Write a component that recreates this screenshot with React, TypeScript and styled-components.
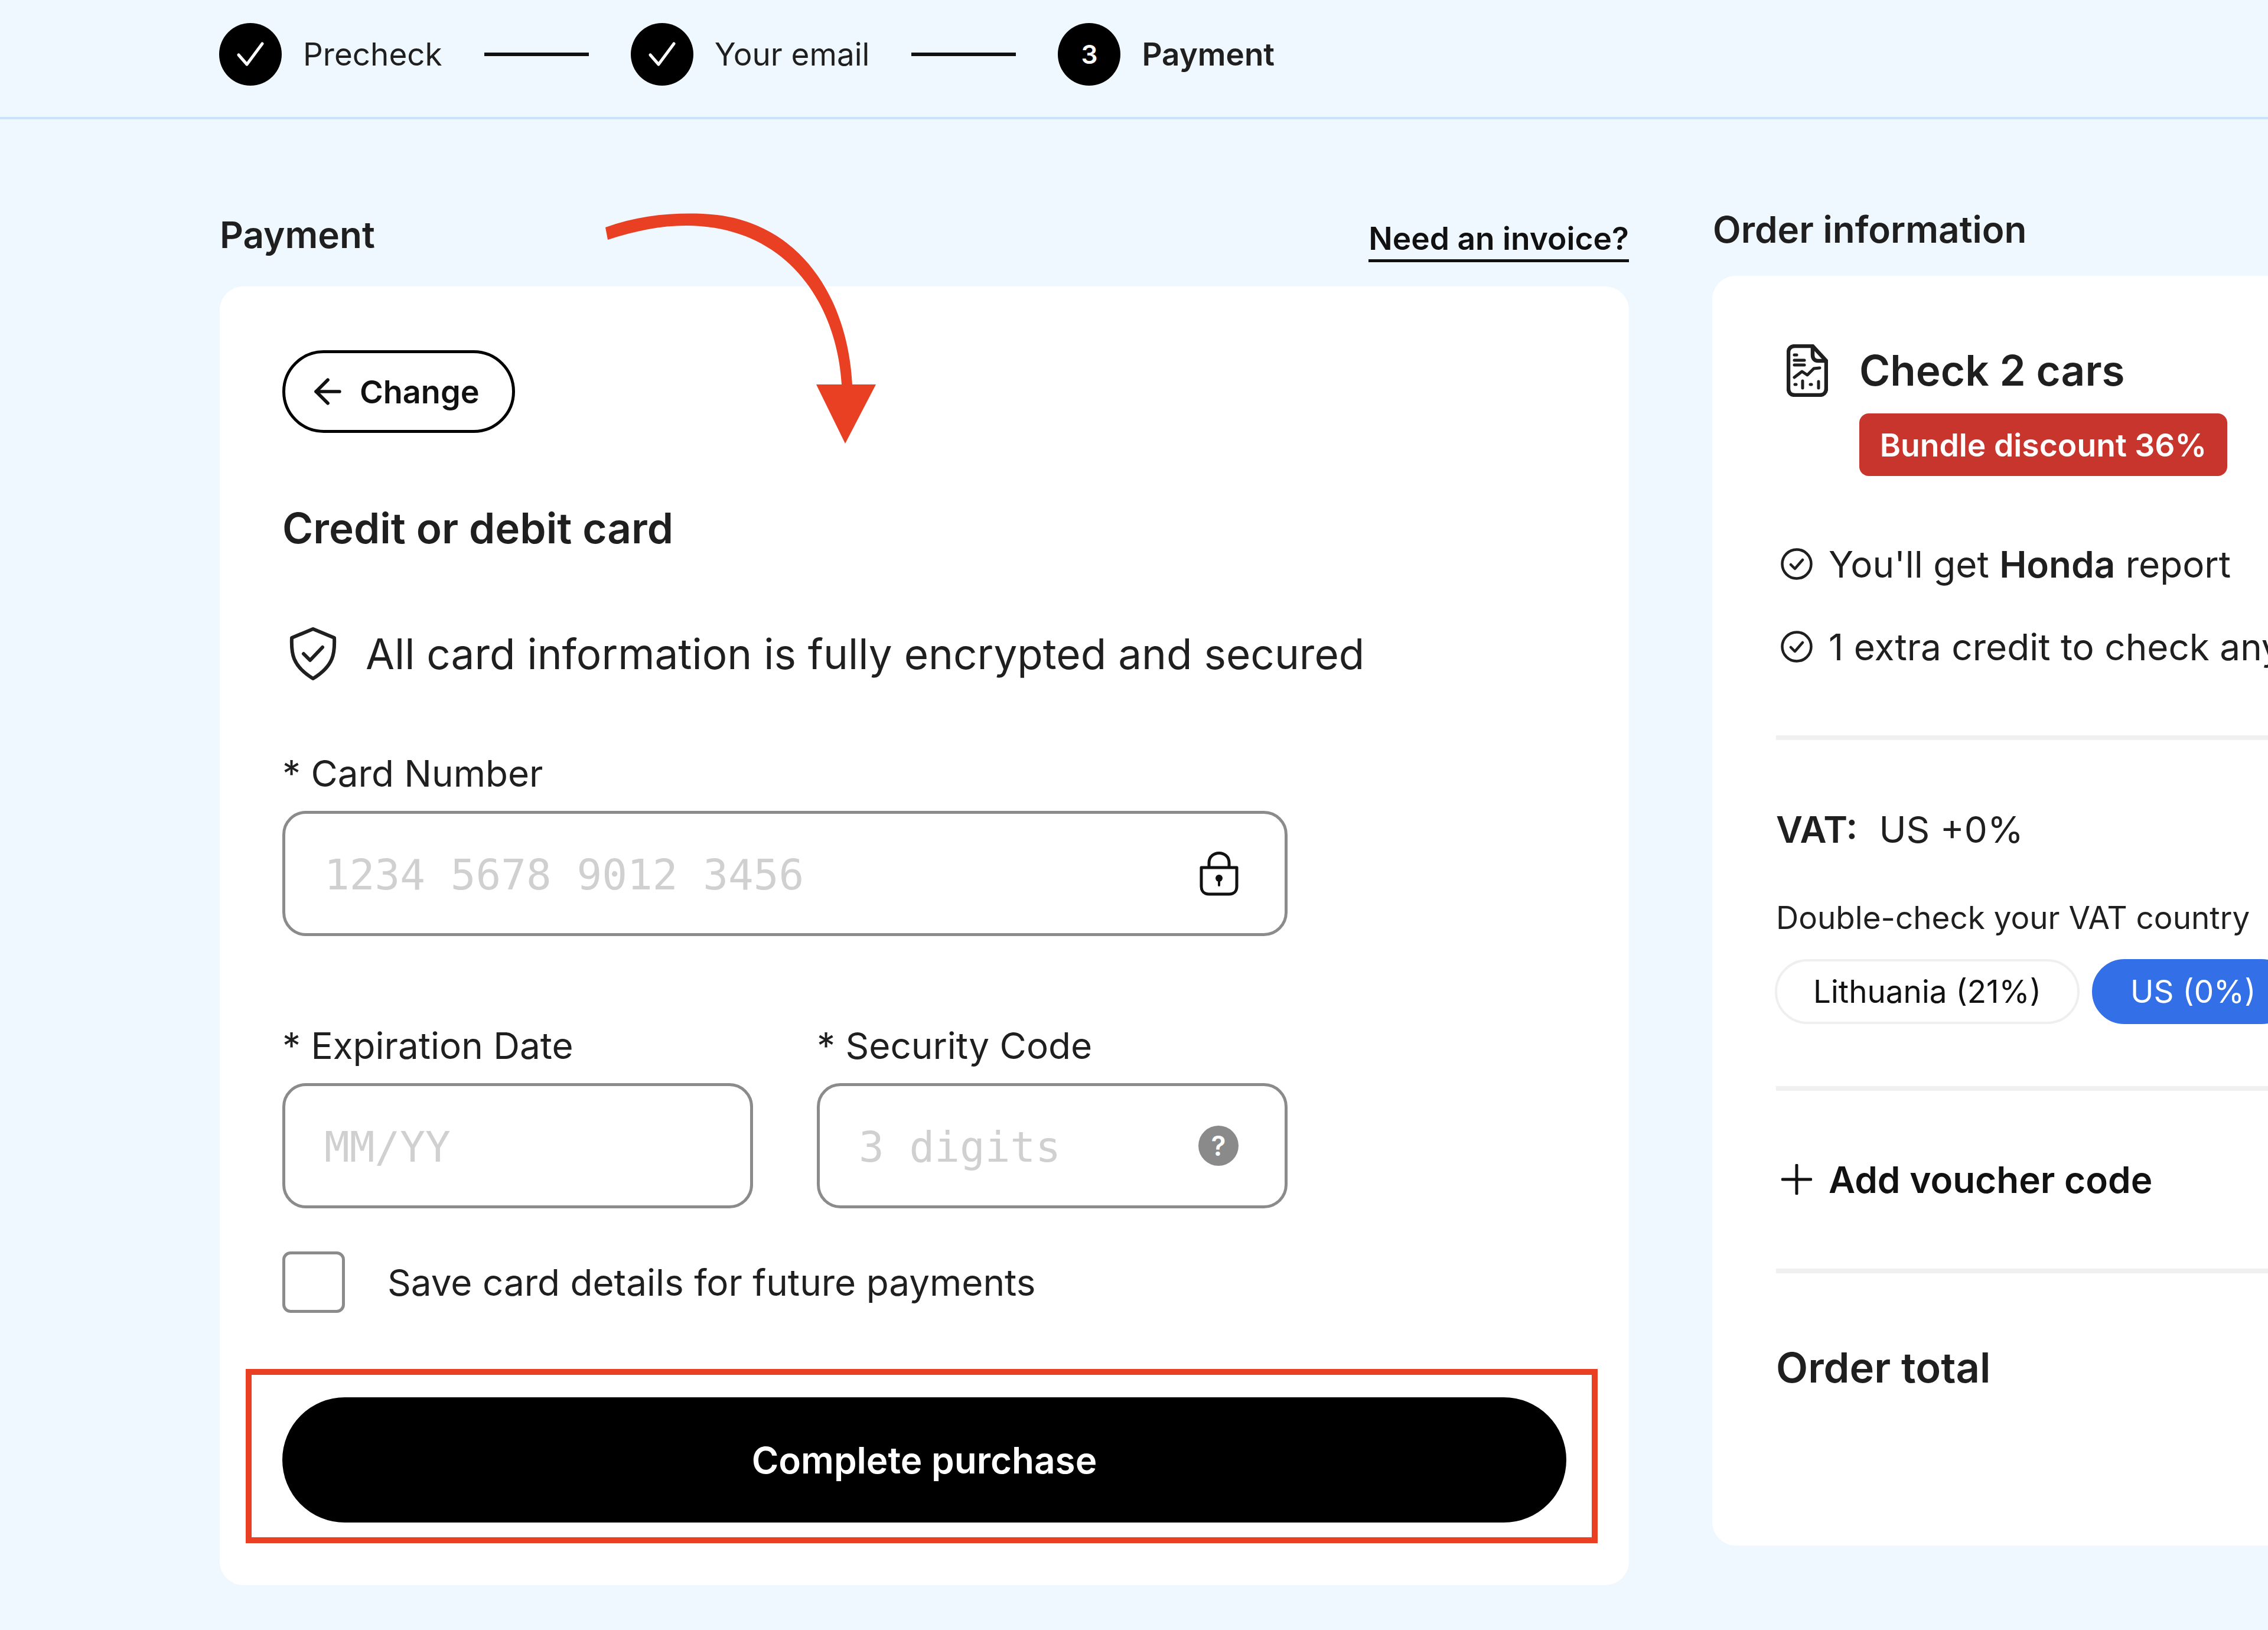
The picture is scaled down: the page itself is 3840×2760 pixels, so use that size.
import React from "react";
import styled, { createGlobalStyle } from "styled-components";
import { ArrowLeft } from "lucide-react";

const GlobalStyle = createGlobalStyle`
  html, body {
    margin: 0;
    padding: 0;
    background: #f0f8ff;
  }
  * {
    box-sizing: border-box;
  }
`;

const Page = styled.div`
  position: relative;
  width: 3840px;
  height: 2760px;
  overflow: hidden;
  background: #f0f8ff;
  color: #1f1f1f;
  font-family: Inter, "Liberation Sans", sans-serif;
`;

const Header = styled.header`
  display: flex;
  align-items: center;
  gap: 71px;
  height: 202px;
  padding: 0 0 14px 371px;
  border-bottom: 4px solid #cbe3f8;
`;

const Step = styled.div`
  display: flex;
  align-items: center;
  gap: 36px;
`;

const StepCircle = styled.div`
  display: flex;
  align-items: center;
  justify-content: center;
  width: 106px;
  height: 106px;
  border-radius: 50%;
  background: #000;
  color: #fff;
  font-size: 44px;
  font-weight: 600;
`;

const StepLabel = styled.span<{ $active?: boolean }>`
  font-size: 53px;
  font-weight: ${(p) => (p.$active ? 600 : 400)};
`;

const StepLine = styled.div`
  width: 177px;
  height: 6px;
  background: #111;
`;

const Main = styled.main`
  display: flex;
  gap: 141px;
  padding: 108px 0 0 372px;
`;

const PaymentColumn = styled.section`
  flex: none;
  width: 2386px;
`;

const OrderColumn = styled.section`
  flex: none;
  width: 1400px;
`;

const PaymentHead = styled.div`
  display: flex;
  align-items: center;
  justify-content: space-between;
  height: 175px;
`;

const OrderHead = styled.div`
  display: flex;
  align-items: center;
  height: 157px;
  padding-left: 1px;
`;

const SectionTitle = styled.h2`
  margin: 0;
  font-size: 62px;
  font-weight: 600;
`;

const InvoiceLink = styled.a`
  align-self: flex-end;
  margin-bottom: 41px;
  padding-bottom: 2px;
  border-bottom: 5px solid #111;
  color: #111;
  font-size: 53.3px;
  font-weight: 600;
  line-height: 66px;
`;

const Card = styled.div`
  background: #fff;
  border-radius: 40px;
`;

const PaymentCard = styled(Card)`
  display: flex;
  flex-direction: column;
  align-items: flex-start;
  padding: 108px 106px 106px;
`;

const ChangeButton = styled.button`
  display: flex;
  align-items: center;
  gap: 20px;
  width: 394px;
  height: 140px;
  padding: 0 0 0 38px;
  border: 5px solid #000;
  border-radius: 70px;
  background: #fff;
  color: #111;
  font-family: inherit;
  font-size: 54px;
  font-weight: 600;
`;

const CardTitle = styled.h3`
  margin: 111px 0 0;
  height: 100px;
  line-height: 100px;
  font-size: 71px;
  font-weight: 600;
`;

const SecureRow = styled.div`
  display: flex;
  align-items: center;
  gap: 47px;
  height: 100px;
  margin: 113px 0 0 10px;
  font-size: 71px;
`;

const FieldLabel = styled.label`
  display: block;
  height: 80px;
  line-height: 80px;
  font-size: 62px;
`;

const Field = styled.div<{ $top: number }>`
  margin-top: ${(p) => p.$top}px;
`;

const FieldRow = styled.div`
  display: flex;
  gap: 108px;
  margin-top: 146px;
`;

const InputBox = styled.div<{ $width: number }>`
  display: flex;
  align-items: center;
  justify-content: space-between;
  width: ${(p) => p.$width}px;
  height: 212px;
  margin-top: 23px;
  padding: 0 78px 0 66px;
  border: 5px solid #8b8b8b;
  border-radius: 40px;
  background: #fff;
`;

const Input = styled.input`
  flex: 1;
  min-width: 0;
  padding: 4px 0 0;
  border: none;
  outline: none;
  background: transparent;
  font-family: "DejaVu Sans Mono", "Liberation Mono", monospace;
  font-size: 71px;

  &::placeholder {
    color: #d0d0d0;
    opacity: 1;
  }
`;

const HelpBadge = styled.span`
  display: flex;
  align-items: center;
  justify-content: center;
  flex: none;
  width: 68px;
  height: 68px;
  border-radius: 50%;
  background: #8a8a8a;
  color: #fff;
  font-size: 46px;
  font-weight: 600;
`;

const SaveRow = styled.div`
  display: flex;
  align-items: center;
  gap: 72px;
  margin-top: 73px;
  font-size: 62px;
`;

const Checkbox = styled.div`
  width: 106px;
  height: 104px;
  border: 5px solid #8b8b8b;
  border-radius: 14px;
`;

const PurchaseWrap = styled.div`
  position: relative;
  width: 100%;
  margin-top: 143px;
`;

const PurchaseButton = styled.button`
  display: block;
  width: 100%;
  height: 212px;
  border: none;
  border-radius: 106px;
  background: #000;
  color: #fff;
  font-family: inherit;
  font-size: 62px;
  font-weight: 600;
`;

const Highlight = styled.div`
  position: absolute;
  inset: -48px -53px -35px -62px;
  border: 10px solid #e94024;
  pointer-events: none;
`;

const ArrowMark = styled.svg`
  position: absolute;
  left: 0;
  top: 0;
  pointer-events: none;
`;

const OrderCard = styled(Card)`
  padding: 110px 0 256px 108px;
`;

const ProductRow = styled.div`
  display: flex;
  gap: 53px;
  padding-left: 18px;
`;

const ProductIcon = styled.svg`
  flex: none;
  margin-top: 6px;
`;

const ProductName = styled.div`
  height: 100px;
  line-height: 100px;
  font-size: 71px;
  font-weight: 600;
`;

const DiscountBadge = styled.div`
  display: flex;
  align-items: center;
  justify-content: center;
  width: 623px;
  height: 106px;
  margin-top: 23px;
  border-radius: 16px;
  background: #c8352d;
  color: #fff;
  font-size: 53.5px;
  font-weight: 600;
`;

const PerkRow = styled.div<{ $top: number }>`
  display: flex;
  align-items: center;
  gap: 27px;
  height: 80px;
  margin-top: ${(p) => p.$top}px;
  padding-left: 8px;
  font-size: 62px;
  white-space: nowrap;

  b {
    font-weight: 600;
  }
`;

const Divider = styled.div<{ $top: number }>`
  height: 8px;
  margin-top: ${(p) => p.$top}px;
  background: #f0f0f0;
`;

const VatRow = styled.div`
  display: flex;
  gap: 36px;
  height: 80px;
  line-height: 80px;
  margin-top: 112px;
  font-size: 62px;

  b {
    font-weight: 600;
  }
`;

const VatHint = styled.div`
  height: 70px;
  line-height: 70px;
  margin-top: 74px;
  font-size: 53px;
`;

const PillRow = styled.div`
  display: flex;
  gap: 21px;
  margin: 35px 0 0 -2px;
`;

const Pill = styled.div<{ $active?: boolean }>`
  display: flex;
  align-items: center;
  flex: none;
  height: 110px;
  padding: 0 61px;
  border: 4px solid ${(p) => (p.$active ? "#3370e8" : "#efefef")};
  border-radius: 55px;
  background: ${(p) => (p.$active ? "#3370e8" : "#fff")};
  color: ${(p) => (p.$active ? "#fff" : "#111")};
  font-size: 53px;
`;

const VoucherRow = styled.div`
  display: flex;
  align-items: center;
  gap: 28px;
  height: 80px;
  margin-top: 110px;
  padding-left: 9px;
  color: #111;
  font-size: 62px;
  font-weight: 600;
`;

const TotalTitle = styled.div`
  height: 90px;
  line-height: 90px;
  margin-top: 115px;
  font-size: 70.5px;
  font-weight: 600;
`;

function StepCheck() {
  return (
    <svg width="50" height="50" viewBox="0 0 50 50" fill="none">
      <path
        d="M5 26 L19 42 L45 7"
        stroke="#fff"
        strokeWidth="5"
        strokeLinecap="round"
        strokeLinejoin="round"
      />
    </svg>
  );
}

function ShieldIcon() {
  return (
    <svg width="84" height="92" viewBox="0 0 84 92" fill="none">
      <path
        d="M42 4 L78 19 C79 44 78 66 42 88 C6 66 5 44 6 19 Z"
        stroke="#1f1f1f"
        strokeWidth="6"
        strokeLinejoin="round"
      />
      <path
        d="M26 46 L37 57 L58 35"
        stroke="#1f1f1f"
        strokeWidth="6"
        strokeLinecap="round"
        strokeLinejoin="round"
      />
    </svg>
  );
}

function LockIcon() {
  return (
    <svg width="66" height="76" viewBox="0 0 66 76" fill="none" style={{ flex: "none" }}>
      <path d="M16 28 V20 C16 -2 50 -2 50 20 V28" stroke="#111" strokeWidth="5" />
      <path
        d="M3 28 H63 V60 C63 68 58 73 50 73 H16 C8 73 3 68 3 60 Z"
        stroke="#111"
        strokeWidth="5"
        strokeLinejoin="round"
      />
      <circle cx="33" cy="46" r="6" fill="#111" />
      <path d="M33 48 V58" stroke="#111" strokeWidth="4" strokeLinecap="round" />
    </svg>
  );
}

function ReportIcon() {
  return (
    <ProductIcon width="70" height="89" viewBox="0 0 70 89" fill="none">
      <path
        d="M14 3 H44 L67 28 V75 C67 82 62 86 56 86 H14 C7 86 3 82 3 75 V14 C3 7 7 3 14 3 Z"
        stroke="#1f1f1f"
        strokeWidth="6.5"
        strokeLinejoin="round"
      />
      <path
        d="M44 3 V18 C44 24 47 28 53 28 H67"
        stroke="#1f1f1f"
        strokeWidth="6.5"
        strokeLinejoin="round"
      />
      <g stroke="#1f1f1f" strokeWidth="5" strokeLinecap="round" strokeLinejoin="round">
        <path d="M13 18 H17" />
        <path d="M13 27 H30" />
        <path d="M13 35 H30" />
        <path d="M13 56 L26 46 L35 52 L46 41 L56 40" />
        <path d="M14 68 H16" />
        <path d="M27 62 V74" />
        <path d="M40 68 H42" />
        <path d="M54 63 V74" />
      </g>
    </ProductIcon>
  );
}

function PerkCheck() {
  return (
    <svg width="54" height="54" viewBox="0 0 54 54" fill="none" style={{ flex: "none" }}>
      <circle cx="27" cy="27" r="24.5" stroke="#1f1f1f" strokeWidth="4.5" />
      <path
        d="M17 28 L24 35 L37 20"
        stroke="#1f1f1f"
        strokeWidth="4.5"
        strokeLinecap="round"
        strokeLinejoin="round"
      />
    </svg>
  );
}

function PlusIcon() {
  return (
    <svg width="52" height="52" viewBox="0 0 52 52" fill="none" style={{ flex: "none" }}>
      <path d="M2 26 H50 M26 2 V50" stroke="#111" strokeWidth="5" strokeLinecap="round" />
    </svg>
  );
}

export default function App() {
  return (
    <Page>
      <GlobalStyle />
      <Header>
        <Step>
          <StepCircle>
            <StepCheck />
          </StepCircle>
          <StepLabel>Precheck</StepLabel>
        </Step>
        <StepLine />
        <Step>
          <StepCircle>
            <StepCheck />
          </StepCircle>
          <StepLabel>Your email</StepLabel>
        </Step>
        <StepLine />
        <Step>
          <StepCircle>3</StepCircle>
          <StepLabel $active>Payment</StepLabel>
        </Step>
      </Header>
      <Main>
        <PaymentColumn>
          <PaymentHead>
            <SectionTitle>Payment</SectionTitle>
            <InvoiceLink>Need an invoice?</InvoiceLink>
          </PaymentHead>
          <PaymentCard>
            <ChangeButton>
              <ArrowLeft size={68} strokeWidth={2} />
              Change
            </ChangeButton>
            <CardTitle>Credit or debit card</CardTitle>
            <SecureRow>
              <ShieldIcon />
              All card information is fully encrypted and secured
            </SecureRow>
            <Field $top={113}>
              <FieldLabel>* Card Number</FieldLabel>
              <InputBox $width={1702}>
                <Input placeholder="1234 5678 9012 3456" />
                <LockIcon />
              </InputBox>
            </Field>
            <FieldRow>
              <div>
                <FieldLabel>* Expiration Date</FieldLabel>
                <InputBox $width={797}>
                  <Input placeholder="MM/YY" />
                </InputBox>
              </div>
              <div>
                <FieldLabel>* Security Code</FieldLabel>
                <InputBox $width={797}>
                  <Input placeholder="3 digits" />
                  <HelpBadge>?</HelpBadge>
                </InputBox>
              </div>
            </FieldRow>
            <SaveRow>
              <Checkbox />
              Save card details for future payments
            </SaveRow>
            <PurchaseWrap>
              <PurchaseButton>Complete purchase</PurchaseButton>
              <Highlight />
            </PurchaseWrap>
          </PaymentCard>
        </PaymentColumn>
        <OrderColumn>
          <OrderHead>
            <SectionTitle>Order information</SectionTitle>
          </OrderHead>
          <OrderCard>
            <ProductRow>
              <ReportIcon />
              <div>
                <ProductName>Check 2 cars</ProductName>
                <DiscountBadge>Bundle discount 36%</DiscountBadge>
              </div>
            </ProductRow>
            <PerkRow $top={109}>
              <PerkCheck />
              <span>
                You'll get <b>Honda</b> report
              </span>
            </PerkRow>
            <PerkRow $top={60}>
              <PerkCheck />
              <span>1 extra credit to check any car</span>
            </PerkRow>
            <Divider $top={110} />
            <VatRow>
              <b>VAT:</b>
              <span>US +0%</span>
            </VatRow>
            <VatHint>Double-check your VAT country</VatHint>
            <PillRow>
              <Pill>Lithuania (21%)</Pill>
              <Pill $active>US (0%)</Pill>
            </PillRow>
            <Divider $top={105} />
            <VoucherRow>
              <PlusIcon />
              Add voucher code
            </VoucherRow>
            <Divider $top={111} />
            <TotalTitle>Order total</TotalTitle>
          </OrderCard>
        </OrderColumn>
      </Main>
      <ArrowMark width="3840" height="2760" viewBox="0 0 3840 2760">
        <path
          d="M1025 385 C1080 365 1135 360 1190 362 C1350 368 1435 500 1443 651 L1483 651 L1431 751 L1382 651 L1425 651 C1417 520 1340 395 1186 383 C1135 379 1085 388 1029 406 Z"
          fill="#e94024"
        />
      </ArrowMark>
    </Page>
  );
}
